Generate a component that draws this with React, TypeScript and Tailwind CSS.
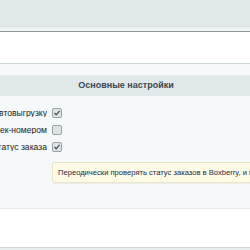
export default function App() {
  const rows = [
    { label: "Включить автовыгрузку", checked: true },
    { label: "Отправлять вместе с трек-номером", checked: false },
    { label: "Проверять статус заказа", checked: true },
  ];

  return (
    <div className="w-[250px] h-[250px] overflow-hidden bg-[#e0e8ea] flex flex-col" style={{ fontFamily: '"Liberation Sans", Arial, sans-serif' }}>
      {/* top bar */}
      <div className="h-[26px] shrink-0 bg-[#e0e8ea]" />
      <div className="h-[5px] shrink-0 bg-[#eef3f4] border-t border-[#d6dfe2]" />
      <div className="h-[1px] shrink-0 bg-[#8e9699]" />

      {/* white area */}
      <div className="h-[32px] shrink-0 bg-white border-b border-[#cdd6da]" />

      {/* settings */}
      <div className="shrink-0 bg-[#f5f9f9]">
        <div className="h-[11px]" />
        <div className="h-[21px] bg-[#e0e8ea] border-t border-[#e6ebe0] flex items-center justify-center">
          <span className="text-[9px] font-bold text-[#3a4750] pl-[2px]">Основные настройки</span>
        </div>

        <div className="pt-[12px] flex flex-col gap-[7px]">
          {rows.map((r) => (
            <div key={r.label} className="flex items-center h-[10px]">
              <div className="w-[47px] shrink-0 overflow-hidden flex justify-end">
                <span className="text-[8.6px] text-[#1a1a1a] whitespace-nowrap leading-none">{r.label}</span>
              </div>
              <div className="ml-[5px] w-[10px] h-[10px] rounded-[2px] border border-[#9aa2a6] bg-[#dde3e6] flex items-center justify-center">
                {r.checked && (
                  <svg width="8" height="8" viewBox="0 0 8 8">
                    <path d="M1.5 4 L3.2 5.8 L6.6 1.8" fill="none" stroke="#4a5256" strokeWidth="1.3" />
                  </svg>
                )}
              </div>
            </div>
          ))}
        </div>

        <div className="pt-[10px] pl-[52px] pb-[25px]">
          <div className="h-[21px] w-[240px] bg-[#fdfbe6] border border-[#e9e4c4] rounded-[2px] shadow-[1px_1px_1px_rgba(0,0,0,0.06)] flex items-center pl-[5px]">
            <span className="text-[7.6px] text-[#222a44] whitespace-nowrap">Переодически проверять статус заказов в Boxberry, и менять статус заказа</span>
          </div>
        </div>
      </div>

      <div className="h-[1px] shrink-0 bg-[#e6ecee]" />
      <div className="h-[38px] shrink-0 bg-white" />
      <div className="h-[1px] shrink-0 bg-[#cfd6d9]" />
      <div className="flex-1 bg-[#e6ecee]" />
    </div>
  );
}
